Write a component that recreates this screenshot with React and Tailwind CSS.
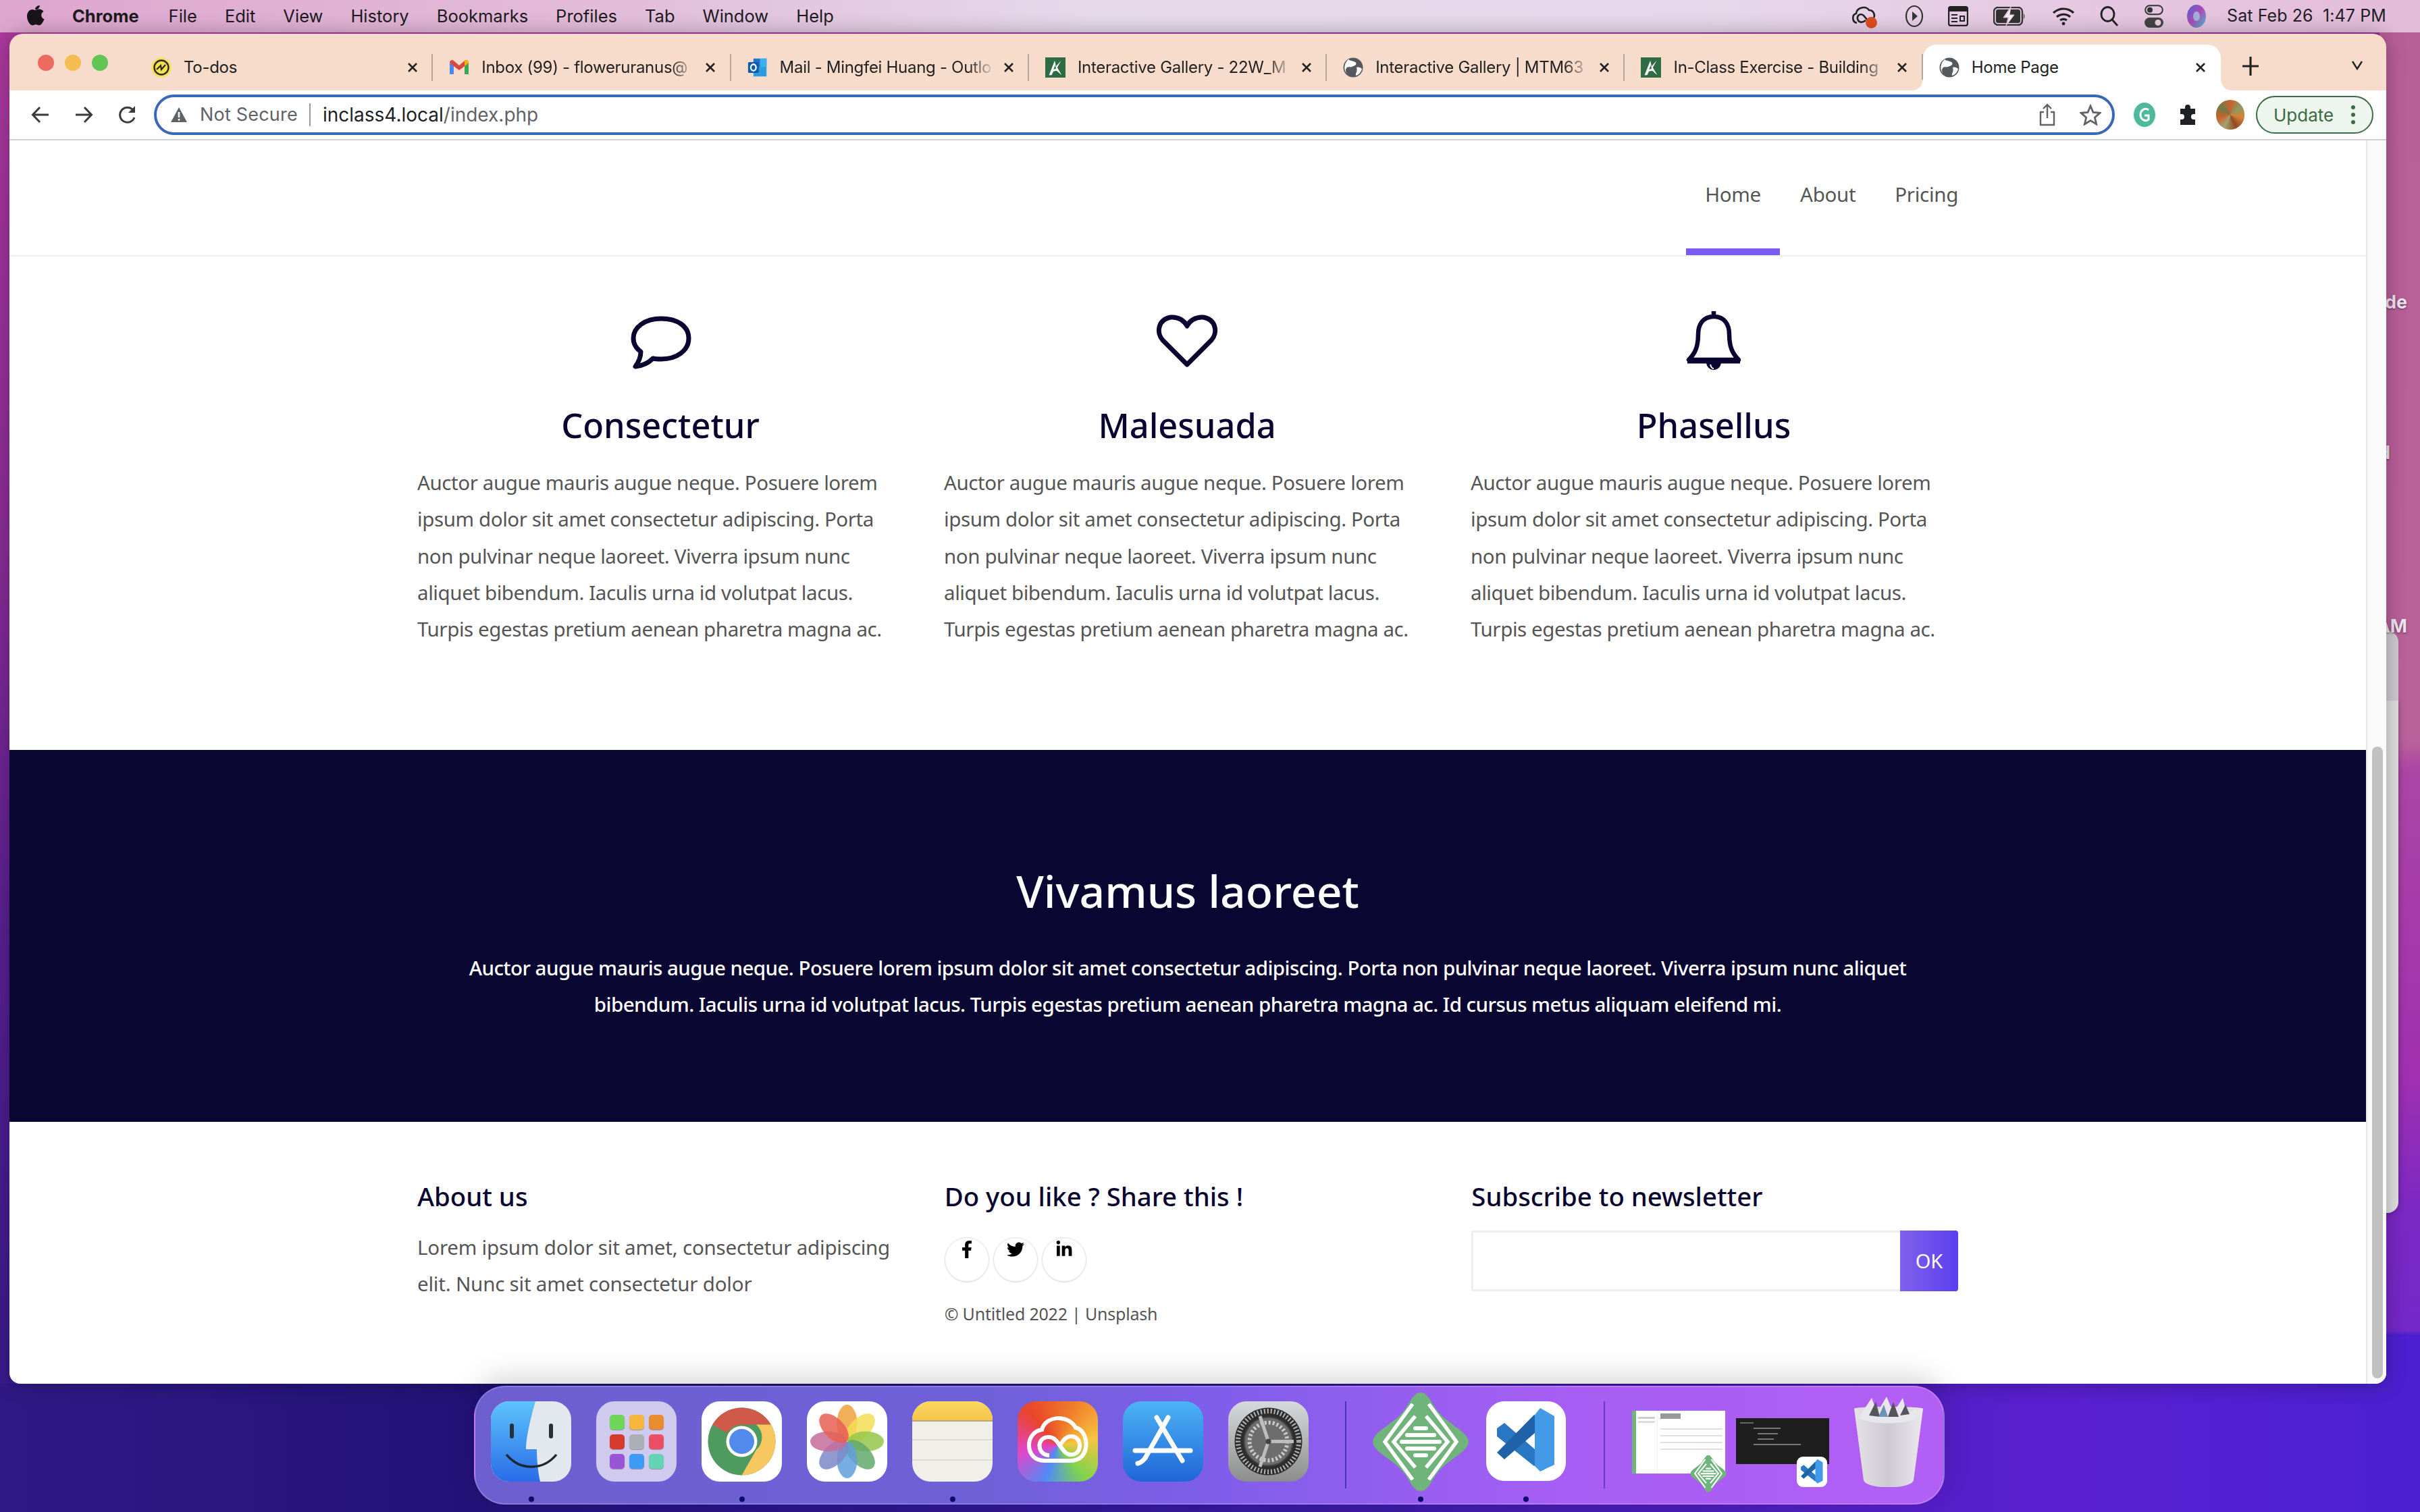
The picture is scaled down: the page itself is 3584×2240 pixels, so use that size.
import React from "react";
import { FaFacebookF, FaTwitter, FaLinkedinIn } from "react-icons/fa";

const LOREM = [
  "Auctor augue mauris augue neque. Posuere lorem",
  "ipsum dolor sit amet consectetur adipiscing. Porta",
  "non pulvinar neque laoreet. Viverra ipsum nunc",
  "aliquet bibendum. Iaculis urna id volutpat lacus.",
  "Turpis egestas pretium aenean pharetra magna ac.",
];

function XIcon() {
  return (
    <svg width="16" height="16" viewBox="0 0 16 16" className="shrink-0">
      <path d="M2 2 14 14M14 2 2 14" stroke="#222" strokeWidth="2.6" />
    </svg>
  );
}

function Globe() {
  return (
    <svg width="30" height="30" viewBox="0 0 30 30">
      <circle cx="15" cy="15" r="14.5" fill="#55595e" />
      <path d="M8 3c4 3 9 2 11 5s-3 5-6 6-6-1-8 2-1 6 2 9l-2-2C1 19 1 9 8 3Z" fill="#fff" />
      <path d="M20 15c3-1 6 0 8 2-1 5-5 9-9 10-1-4 3-5 1-12Z" fill="#fff" />
    </svg>
  );
}

function AC() {
  return (
    <svg width="32" height="32" viewBox="0 0 32 32">
      <rect width="32" height="32" fill="#2f6b45" />
      <path d="M6 28 15 5l2 9 8-9-6 11 7 12-8-7-5 1-3 6Z" fill="#fff" />
      <path d="M13 19l3-7 1 6Z" fill="#2f6b45" />
    </svg>
  );
}

function Todos() {
  return (
    <svg width="30" height="30" viewBox="0 0 30 30">
      <circle cx="15" cy="15" r="14.5" fill="#f7e04b" />
      <circle cx="15" cy="15" r="10.5" fill="none" stroke="#2a2a22" strokeWidth="2.4" />
      <path d="M8 18l6-6 1 6 6-7" fill="none" stroke="#2a2a22" strokeWidth="2.2" />
    </svg>
  );
}

function Gmail() {
  return (
    <svg width="30" height="30" viewBox="0 0 30 30">
      <path d="M1 8v17h6V12Z" fill="#4a87ee" />
      <path d="M29 8v17h-6V12Z" fill="#3aa757" />
      <path d="M1 8c0-4 4-5 6-3l8 7 8-7c2-2 6-1 6 3l-6 5-8 6-8-6Z" fill="#d9473d" />
      <path d="M23 5c2-2 6-1 6 3l-6 5Z" fill="#f4b400" />
    </svg>
  );
}

function Outlook() {
  return (
    <svg width="34" height="34" viewBox="0 0 34 34">
      <rect x="10" y="2" width="22" height="14" fill="#1f74c9" />
      <rect x="10" y="16" width="22" height="16" fill="#2b9ae0" />
      <rect x="21" y="2" width="11" height="14" fill="#37b0ee" />
      <rect x="1" y="8" width="18" height="18" rx="2" fill="#0f5cab" />
      <ellipse cx="10" cy="17" rx="4.4" ry="5.4" fill="none" stroke="#fff" strokeWidth="2.6" />
    </svg>
  );
}

function Tab({ icon, title, active, wide }) {
  return (
    <div
      className={
        "relative flex h-[68px] w-[441.3px] shrink-0 items-center pl-[24px] " +
        (active ? "rounded-t-[20px] bg-white" : "")
      }
    >
      <div className="flex w-[30px] shrink-0 items-center justify-center">{icon}</div>
      <div
        className={
          "ml-[18px] w-[318px] whitespace-nowrap text-[24px] tracking-[-0.3px] text-[#222] " +
          (wide ? "" : "[mask-image:linear-gradient(to_right,#000_88%,transparent)]")
        }
      >
        {title}
      </div>
      <div className="ml-[13px]">
        <XIcon />
      </div>
      {active ? (
        <>
          <div className="absolute bottom-0 left-[-16px] h-[16px] w-[16px] bg-[radial-gradient(circle_at_0_0,#f7dccc_15.5px,#fff_16px)]" />
          <div className="absolute bottom-0 right-[-16px] h-[16px] w-[16px] bg-[radial-gradient(circle_at_100%_0,#f7dccc_15.5px,#fff_16px)]" />
        </>
      ) : (
        <div className="absolute right-0 top-[14px] h-[40px] w-[2px] bg-[#b5a79e]" />
      )}
    </div>
  );
}

function MenuBar() {
  const items = ["File", "Edit", "View", "History", "Bookmarks", "Profiles", "Tab", "Window", "Help"];
  return (
    <div className="relative z-10 flex h-[48px] shrink-0 items-center bg-[linear-gradient(to_right,#dea6cf_0%,#e2bcd9_25%,#e5d9ea_45%,#e6d8ea_70%,#e6c6e0_88%,#e3bcd8_100%)] pl-[40px] pr-[37px] font-['Inter',sans-serif] text-[25.5px] text-[#1d1a20]">
      <svg width="26" height="31" viewBox="0 0 26 31" className="-mt-[3px]">
        <path
          d="M19 1c0 3-3 7-7 6 0-3 3-6 7-6Zm-7 7c2 0 3-1.400 6-1.400 2.500 0 5 1.400 6.500 3.400-5 3-4 9.500 1 11.500-1.500 4-4.500 9-7.500 9-2 0-3-1.300-5-1.300s-3 1.300-5 1.300C4 30.500 0 23 0 17c0-6 4-10 8-10 1.500 0 3 1 4 1Z"
          fill="#17141a"
        />
      </svg>
      <div className="ml-[41px] font-bold">Chrome</div>
      <div className="ml-[44px] flex gap-[41px]">
        {items.map((m) => (
          <span key={m}>{m}</span>
        ))}
      </div>
      <div className="ml-auto flex items-center">
        <div className="relative h-[36px] w-[40px]">
          <svg width="38" height="34" viewBox="0 0 38 34" fill="none" stroke="#222" strokeWidth="2.6">
            <path d="M9 28C2 27 1 16 8 14 9 5 22 2 27 9c7 0 10 8 6 13" />
            <path d="M22 24c-5 5-11 3-12-2s4-9 9-5l5 6" />
          </svg>
          <div className="absolute bottom-0 right-[1px] h-[17px] w-[17px] rounded-full bg-[#df4d22]" />
        </div>
        <svg className="ml-[40px]" width="28" height="34" viewBox="0 0 28 34" fill="none">
          <ellipse cx="14" cy="17" rx="12" ry="15" stroke="#333" strokeWidth="2.2" />
          <path d="M11 10l8 7-8 7Z" fill="#333" />
        </svg>
        <svg className="ml-[36px]" width="30" height="30" viewBox="0 0 30 30" fill="none">
          <rect x="1" y="1" width="28" height="28" rx="3" stroke="#222" strokeWidth="2.4" />
          <rect x="1" y="1" width="28" height="7" fill="#222" />
          <path d="M5 13h9M5 18h9M5 23h9M18 15h6v7h-6Z" stroke="#222" strokeWidth="2" />
        </svg>
        <svg className="ml-[37px]" width="48" height="28" viewBox="0 0 48 28" fill="none">
          <rect x="1" y="1" width="42" height="26" rx="6" stroke="#333" strokeWidth="2.4" />
          <rect x="4" y="4" width="36" height="20" rx="3" fill="#333" />
          <path d="M45 10c2 1 2 7 0 8Z" fill="#555" />
          <path d="M26 0 15 16h7l-3 12 12-16h-7Z" fill="#e8c8df" stroke="#e8c8df" />
          <path d="M25 4 18 15h6l-2 8 7-10h-6Z" fill="#fff" />
        </svg>
        <svg className="ml-[39px]" width="34" height="28" viewBox="0 0 34 28" fill="none" stroke="#222" strokeWidth="3.2">
          <path d="M2 9c9-8 21-8 30 0M7 15c6-5 14-5 20 0M12 20c3-2 7-2 10 0" />
          <circle cx="17" cy="25" r="2.400" fill="#222" stroke="none" />
        </svg>
        <svg className="ml-[37px]" width="28" height="30" viewBox="0 0 28 30" fill="none" stroke="#222" strokeWidth="2.800">
          <ellipse cx="11.500" cy="12" rx="9.500" ry="10.500" />
          <path d="M18 20l8 9" />
        </svg>
        <svg className="ml-[38px]" width="28" height="34" viewBox="0 0 28 34">
          <rect x="1.200" y="1.200" width="25.600" height="13" rx="6.500" fill="none" stroke="#333" strokeWidth="2" />
          <circle cx="8" cy="7.700" r="4" fill="#333" />
          <rect x="0" y="19" width="28" height="15" rx="7.500" fill="#444" />
          <circle cx="20" cy="26.500" r="4.500" fill="#e8d0e4" />
        </svg>
        <svg className="ml-[35px]" width="28" height="34" viewBox="0 0 28 34">
          <defs>
            <linearGradient id="siri" x1="0" y1="0" x2="1" y2="1">
              <stop offset="0" stopColor="#4a66c9" />
              <stop offset=".5" stopColor="#b04ab8" />
              <stop offset="1" stopColor="#3ec8d8" />
            </linearGradient>
          </defs>
          <ellipse cx="14" cy="17" rx="14" ry="17" fill="url(#siri)" />
          <ellipse cx="14" cy="17" rx="5" ry="7" fill="#9fd8e8" opacity=".7" />
        </svg>
        <div className="ml-[31px] w-[249px] shrink-0 whitespace-pre text-[25px] tracking-[0.1px] text-[#221e26]">Sat Feb 26  1:47 PM</div>
      </div>
    </div>
  );
}

function Toolbar() {
  return (
    <div className="flex h-[72px] shrink-0 items-center bg-white pl-[32px] font-['Inter',sans-serif]">
      <svg width="28" height="28" viewBox="0 0 28 28" fill="none" stroke="#3b3b3b" strokeWidth="3">
        <path d="M26 14H3M13 3 2.500 14 13 25" />
      </svg>
      <svg className="ml-[36px]" width="28" height="28" viewBox="0 0 28 28" fill="none" stroke="#3b3b3b" strokeWidth="3">
        <path d="M2 14h23M15 3l10.500 11L15 25" />
      </svg>
      <svg className="ml-[36px]" width="30" height="30" viewBox="0 0 30 30" fill="none" stroke="#3b3b3b" strokeWidth="3">
        <path d="M25 19a11 11 0 1 1-2-11" />
        <path d="M26 2v10H16Z" fill="#3b3b3b" stroke="none" />
      </svg>
      <div className="ml-[24px] flex h-[60px] w-[2904px] shrink-0 items-center rounded-full border-[4px] border-[#3a68b8] pl-[20px] pr-[16px]">
        <svg width="26" height="24" viewBox="0 0 26 24">
          <path d="M13 1 25 23H1Z" fill="#5f6368" />
          <rect x="11.700" y="8" width="2.600" height="8" fill="#fff" />
          <rect x="11.700" y="18" width="2.600" height="2.600" fill="#fff" />
        </svg>
        <span className="ml-[18px] text-[27px] tracking-[0.2px] text-[#5f6368]">Not Secure</span>
        <span className="ml-[17px] h-[34px] w-[2px] bg-[#9a9a9a]" />
        <span className="ml-[18px] text-[28px] text-[#202124]">
          inclass4.local<span className="text-[#5f6368]">/index.php</span>
        </span>
        <svg className="ml-auto" width="24" height="34" viewBox="0 0 24 34" fill="none" stroke="#5f6368" strokeWidth="2.400">
          <path d="M7 13H2v19h20V13h-5M12 22V2M6 8l6-6 6 6" />
        </svg>
        <svg className="ml-[36px]" width="32" height="32" viewBox="0 0 32 32" fill="none" stroke="#5f6368" strokeWidth="2.800">
          <path d="M16 3l4 9.500 10 .8-7.600 6.600 2.300 10L16 24.600 7.300 30l2.300-10L2 13.300l10-.8Z" />
        </svg>
      </div>
      <svg className="ml-[28px]" width="32" height="36" viewBox="0 0 32 36">
        <ellipse cx="16" cy="18" rx="16" ry="18" fill="#4dbb9b" />
        <path d="M22 11c-5-4-12 0-12 7s7 11 12 7v-6h-6" fill="none" stroke="#fff" strokeWidth="3" />
      </svg>
      <svg className="ml-[32px]" width="32" height="32" viewBox="0 0 32 32">
        <path d="M5 7h7V5a4 4 0 0 1 8 0v2h7v8h-2a4 4 0 0 0 0 8h2v8H5v-8h2a4 4 0 0 0 0-8H5Z" fill="#202124" />
      </svg>
      <div className="ml-[26px] h-[44px] w-[42px] rounded-full bg-[conic-gradient(#c9612a,#8a9a60,#d9803a,#8f4a20,#a8a070,#c9612a,#6f7a4a,#c9612a)]" />
      <div className="ml-[17px] flex h-[56px] w-[174px] items-center rounded-full border-2 border-[#3a6b42] bg-[#eef5ee] pl-[24px] text-[26px] text-[#3a6b42]">
        Update
        <div className="ml-[26px] flex flex-col gap-[5px]">
          <span className="h-[6px] w-[6px] rounded-full bg-[#3a6b42]" />
          <span className="h-[6px] w-[6px] rounded-full bg-[#3a6b42]" />
          <span className="h-[6px] w-[6px] rounded-full bg-[#3a6b42]" />
        </div>
      </div>
    </div>
  );
}

function Bubble() {
  return (
    <svg className="mt-[5px]" width="92" height="80" viewBox="0 0 92 80" fill="none" stroke="#0a0530" strokeWidth="7" strokeLinejoin="round">
      <path d="M47 4C23 4 6 17 6 33c0 8 4 15 11 20 0 8-3 15-8 22 10-1 20-6 26-12 4 1 8 1 12 1 24 0 41-13 41-31S71 4 47 4Z" />
    </svg>
  );
}
function Heart() {
  return (
    <svg width="92" height="80" viewBox="0 0 92 80" fill="none" stroke="#0a0530" strokeWidth="7" strokeLinejoin="round">
      <path d="M46 75 10 39C0 28 3 8 22 5c11-1 20 5 24 13 4-8 13-14 24-13 19 3 22 23 12 34Z" />
    </svg>
  );
}
function Bell() {
  return (
    <svg width="84" height="90" viewBox="0 0 84 90" fill="none" stroke="#0a0530" strokeWidth="6.500" strokeLinejoin="round">
      <path d="M42 1v8" />
      <path d="M42 9C26 9 19 21 19 35c0 18-4 28-14 38h74c-10-10-14-20-14-38 0-14-7-26-23-26Z" />
      <path d="M3 75h78" strokeWidth="7" />
      <path d="M31 76c0 16 22 16 22 0Z" fill="#0a0530" stroke="none" />
      <path d="M37 80c1 4 3 6 5 6" stroke="#fff" strokeWidth="2" />
    </svg>
  );
}

function Feature({ icon, title }) {
  return (
    <div className="flex flex-col">
      <div className="flex h-[92px] items-center justify-center">{icon}</div>
      <h3 className="mt-[46px] text-center text-[50.500px] font-medium leading-[66px] text-[#0a0530]">{title}</h3>
      <p className="mt-[25px] text-[29.500px] leading-[54.300px] tracking-[-0.4px] text-[#555]">
        {LOREM.map((l) => (
          <span key={l} className="block whitespace-nowrap">
            {l}
          </span>
        ))}
      </p>
    </div>
  );
}

function Social({ children }) {
  return (
    <div className="flex h-[66px] w-[66px] justify-center rounded-full border border-[#e2e2e2] pt-[4px] text-[26px] text-black shadow-[0_1px_2px_rgba(0,0,0,0.12)]">
      {children}
    </div>
  );
}

function Page() {
  return (
    <div className="relative flex min-h-0 flex-1 bg-white font-['Noto_Sans',sans-serif]">
      <div className="flex w-[3490px] flex-col">
        <div className="flex h-[172px] shrink-0 justify-end border-b-2 border-[#eee] pr-[604px]">
          <div className="flex text-[29.500px] tracking-[-0.3px] text-[#555]">
            <div className="flex h-[170px] w-[139px] items-center justify-center border-b-[10px] border-[#7a5af0]">Home</div>
            <div className="ml-[30px] flex h-[170px] items-center pb-[10px]">About</div>
            <div className="ml-[58px] flex h-[170px] items-center pb-[10px]">Pricing</div>
          </div>
        </div>
        <div className="h-[731px] shrink-0 pl-[604px] pt-[79px]">
          <div className="grid w-[2280px] grid-cols-3 gap-[60px]">
            <Feature icon={<Bubble />} title="Consectetur" />
            <Feature icon={<Heart />} title="Malesuada" />
            <Feature icon={<Bell />} title="Phasellus" />
          </div>
        </div>
        <div className="h-[551px] shrink-0 bg-[#0a0632] pt-[166px] text-center text-white">
          <h2 className="text-[66px] font-medium leading-[84px]">Vivamus laoreet</h2>
          <p className="mt-[46px] text-[29.500px] font-medium leading-[54px] tracking-[-0.55px]">
            <span className="block">
              Auctor augue mauris augue neque. Posuere lorem ipsum dolor sit amet consectetur adipiscing. Porta non pulvinar neque laoreet. Viverra ipsum nunc aliquet
            </span>
            <span className="block">
              bibendum. Iaculis urna id volutpat lacus. Turpis egestas pretium aenean pharetra magna ac. Id cursus metus aliquam eleifend mi.
            </span>
          </p>
        </div>
        <div className="flex-1 pl-[604px] pt-[80px]">
          <div className="grid w-[2282px] grid-cols-3 gap-[60px]">
            <div>
              <h4 className="text-[38.300px] font-medium leading-[60px] text-[#0a0530]">About us</h4>
              <p className="mt-[19px] whitespace-nowrap text-[29.500px] leading-[54.300px] tracking-[-0.2px] text-[#555]">
                Lorem ipsum dolor sit amet, consectetur adipiscing
                <br />
                elit. Nunc sit amet consectetur dolor
              </p>
            </div>
            <div>
              <h4 className="text-[38.300px] font-medium leading-[60px] text-[#0a0530]">Do you like ? Share this !</h4>
              <div className="mt-[31px] flex gap-[6px]">
                <Social><FaFacebookF /></Social>
                <Social><FaTwitter /></Social>
                <Social><FaLinkedinIn /></Social>
              </div>
              <p className="mt-[29px] text-[25px] tracking-[-0.2px] text-[#555]">© Untitled 2022 | Unsplash</p>
            </div>
            <div>
              <h4 className="text-[38.300px] font-medium leading-[60px] text-[#0a0530]">Subscribe to newsletter</h4>
              <div className="mt-[21px] flex h-[90px]">
                <div className="flex-1 border-[3px] border-r-0 border-[#eee] bg-white" />
                <div className="flex w-[86px] items-center justify-center rounded-r-[4px] bg-[linear-gradient(to_right,#7f62ec,#5b3fee)] text-[29px] text-white">OK</div>
              </div>
            </div>
          </div>
        </div>
      </div>
      <div className="flex w-[30px] flex-col justify-end border-l-2 border-[#e8e8e8] bg-[#fafafa] pb-[8px] pl-[7px]">
        <div className="h-[936px] w-[16px] rounded-full bg-[#c1c1c1]" />
      </div>
    </div>
  );
}

function Win() {
  return (
    <div className="relative z-10 ml-[14px] mt-[2px] flex h-[2000px] w-[3520px] shrink-0 flex-col overflow-hidden rounded-t-[20px] rounded-b-[16px] shadow-[0_0_30px_rgba(0,0,0,0.3)]">
      <div className="flex h-[84px] shrink-0 items-end bg-[#f7dccc]">
        <div className="relative flex w-[186px] shrink-0 items-center self-stretch pl-[42px]">
          <span className="mb-[-2px] flex gap-[16px]">
            <span className="h-[24px] w-[24px] rounded-full bg-[#ee6a5f]" />
            <span className="h-[24px] w-[24px] rounded-full bg-[#f5bd4f]" />
            <span className="h-[24px] w-[24px] rounded-full bg-[#61c454]" />
          </span>
        </div>
        <div className="flex font-['Inter',sans-serif]">
          <Tab icon={<Todos />} title="To-dos" wide />
          <Tab icon={<Gmail />} title="Inbox (99) - floweruranus@" />
          <Tab icon={<Outlook />} title="Mail - Mingfei Huang - Outlo" />
          <Tab icon={<AC />} title="Interactive Gallery - 22W_M" />
          <Tab icon={<Globe />} title="Interactive Gallery | MTM63" />
          <Tab icon={<AC />} title="In-Class Exercise - Building" />
          <Tab icon={<Globe />} title="Home Page" active wide />
        </div>
        <svg className="mb-[20px] ml-[32px]" width="24" height="32" viewBox="0 0 24 32" stroke="#222" strokeWidth="3.200">
          <path d="M12 2v28M0 16h24" />
        </svg>
        <svg className="mb-[28px] ml-[137px]" width="18" height="20" viewBox="0 0 18 20" fill="none" stroke="#222" strokeWidth="2.400">
          <path d="M2 5l7 11 7-11" />
        </svg>
      </div>
      <Toolbar />
      <div className="h-[2px] shrink-0 bg-[#cfcfcf]" />
      <Page />
    </div>
  );
}

function Rounded({ className, children }) {
  return <div className={"h-[119px] w-[119px] shrink-0 overflow-hidden rounded-[27px] " + (className || "")}>{children}</div>;
}

function Finder() {
  return (
    <Rounded>
      <svg width="119" height="119" viewBox="0 0 119 119">
        <defs>
          <linearGradient id="fb" x1="0" y1="0" x2="0" y2="1">
            <stop offset="0" stopColor="#5cc3fb" />
            <stop offset="1" stopColor="#2a6ce8" />
          </linearGradient>
        </defs>
        <rect width="119" height="119" fill="#e3e7ee" />
        <path d="M0 0h66C58 28 52 55 52 71h16c0 18 2 34 5 48H0Z" fill="url(#fb)" />
        <rect x="28" y="33" width="6" height="22" rx="3" fill="#26303c" />
        <rect x="86" y="33" width="6" height="22" rx="3" fill="#26303c" />
        <path d="M23 79c20 24 54 24 74 0" fill="none" stroke="#1f2733" strokeWidth="3.500" />
      </svg>
    </Rounded>
  );
}

function Launchpad() {
  const c = ["#6fd659", "#f4b63d", "#e98c2f", "#d63a2c", "#aab0b5", "#ea4f63", "#9a55d6", "#3d9bf4", "#63d3b4"];
  return (
    <Rounded className="grid grid-cols-[repeat(3,22px)] content-center justify-center gap-[7px] bg-[#d0cbee]">
      {c.map((x) => (
        <span key={x} className="h-[22px] w-[22px] rounded-[5px] shadow-[0_1px_1px_rgba(0,0,0,0.3)]" style={{ backgroundColor: x }} />
      ))}
    </Rounded>
  );
}

function ChromeIcon() {
  return (
    <Rounded className="bg-white">
      <svg width="119" height="119" viewBox="0 0 119 119">
        <circle cx="59.500" cy="59.500" r="50" fill="#4e9a5f" />
        <path d="M59.500 9.500a50 50 0 0 1 43.300 25H59.500a25 25 0 0 0-21.700 12.500L16.200 34.500A50 50 0 0 1 59.500 9.500Z" fill="#d05a4a" />
        <path d="M102.800 34.500a50 50 0 0 1-43.300 75L81 72a25 25 0 0 0 0-37.500Z" fill="#f6c85f" />
        <circle cx="59.500" cy="59.500" r="23" fill="#fff" />
        <circle cx="59.500" cy="59.500" r="18.500" fill="#528bec" />
      </svg>
    </Rounded>
  );
}

function Photos() {
  const c = ["#f0a13c", "#f2de55", "#95c74a", "#62a96c", "#5f9fdb", "#7d88c7", "#c66c9b", "#e75f52"];
  return (
    <Rounded className="bg-white">
      <svg width="119" height="119" viewBox="0 0 119 119">
        {c.map((x, i) => (
          <ellipse key={x} cx="59.500" cy="32" rx="15" ry="27" fill={x} opacity=".85" transform={`rotate(${i * 45} 59.500 59.500)`} />
        ))}
      </svg>
    </Rounded>
  );
}

function Notes() {
  return (
    <Rounded className="bg-[#f1efea]">
      <div className="h-[30px] border-b-2 border-[#b8a678] bg-[linear-gradient(#fbd860,#f5c44a)]" />
      <div className="mt-[26px] h-[2px] bg-[#dcdad5]" />
      <div className="mt-[28px] h-[2px] bg-[#dcdad5]" />
    </Rounded>
  );
}

function CC() {
  return (
    <Rounded className="bg-[conic-gradient(from_200deg_at_50%_55%,#4f8cf7,#e245c8,#e8452a,#f07b2a,#f7c53f,#7fd34e,#4f8cf7)]">
      <svg width="119" height="119" viewBox="0 0 119 119" fill="none" stroke="#fff" strokeWidth="6">
        <path d="M40 88c-30 0-30-42-4-46 6-22 40-22 50-3 20 4 24 49-8 49Z" />
        <path d="M47 80c-18 0-20-26-2-27 10-1 14 8 18 13s8 14 18 13c16-2 14-28-2-27-9 0-13 9-17 14" />
      </svg>
    </Rounded>
  );
}

function AppStore() {
  return (
    <Rounded className="bg-[linear-gradient(#4cb3f5,#1f66d8)]">
      <svg width="119" height="119" viewBox="0 0 119 119" fill="none" stroke="#fff" strokeWidth="7" strokeLinecap="round">
        <path d="M67 24 33 84M50 24l38 64" />
        <path d="M18 73h82" />
        <path d="M33 84c-3 4-6 7-11 8" />
      </svg>
    </Rounded>
  );
}

function Settings() {
  return (
    <Rounded className="bg-[linear-gradient(#d6dadd,#8c8c8c)]">
      <svg width="119" height="119" viewBox="0 0 119 119" fill="none">
        <circle cx="59.500" cy="59.500" r="50" fill="#2d2d2d" />
        <circle cx="59.500" cy="59.500" r="45" stroke="#b5b5b5" strokeWidth="7" strokeDasharray="2 3" />
        <circle cx="59.500" cy="59.500" r="36" fill="#6d6d6d" stroke="#444" strokeWidth="2" />
        <circle cx="59.500" cy="59.500" r="28" stroke="#c9c9c9" strokeWidth="6" strokeDasharray="3 3" />
        <path d="M59.500 59.500 47 22M59.500 59.500H97M59.500 59.500 47 97" stroke="#bdbdbd" strokeWidth="5" />
        <circle cx="59.500" cy="59.500" r="4" fill="#444" />
      </svg>
    </Rounded>
  );
}

function Laragon({ w, h }) {
  return (
    <svg width={w} height={h} viewBox="0 0 144 148" className="shrink-0">
      <path d="M72 1c10 0 14 12 24 26 12 18 47 32 47 47s-35 29-47 47c-10 14-14 26-24 26s-14-12-24-26C36 103 1 89 1 74s35-29 47-47C58 13 62 1 72 1Z" fill="#6fb47b" />
      <g fill="none" stroke="#fff" strokeWidth="5.500">
        <path d="M60 18 19 74l41 56M84 18l41 56-41 56" />
        <path d="M64 36 32 74l32 38M80 36l32 38-32 38" />
      </g>
      <g stroke="#fff" strokeWidth="6" strokeLinecap="round">
        <path d="M64 54h16M52 64h40M44 74h56M52 84h40M64 94h16" />
      </g>
    </svg>
  );
}

function VSCode({ size = 118, r = 27 }) {
  return (
    <div className="shrink-0 overflow-hidden bg-white" style={{ width: size, height: size, borderRadius: r }}>
      <svg width={size} height={size} viewBox="0 0 118 118">
        <path d="M16 40 27 32 80 78v12L71 96 16 52Z" fill="#2a78c4" />
        <path d="M16 76 27 86 80 40V26L71 20Z" fill="#2062a8" />
        <path d="M80 10 101 22V94L80 104 72 96V20Z" fill="#439be8" />
      </svg>
    </div>
  );
}

function Trash() {
  return (
    <svg width="106" height="138" viewBox="0 0 106 138" className="shrink-0">
      <defs>
        <linearGradient id="tr" x1="0" y1="0" x2="1" y2="0">
          <stop offset="0" stopColor="#e4e2e6" />
          <stop offset=".5" stopColor="#cdcad2" />
          <stop offset="1" stopColor="#ebe8ee" />
        </linearGradient>
      </defs>
      <path d="M2 22C2 18 104 18 104 22L90 128c-4 14-70 14-74 0Z" fill="url(#tr)" />
      <path d="M12 30 28 6l8 22 14-24 10 24 14-22 6 24 14-8 2 14c-20 10-66 10-88 0Z" fill="#e8e8ec" />
      <path d="M24 32 34 12l6 22ZM52 34l8-22 8 22ZM70 32l8-16 6 14Z" fill="#54565c" />
      <path d="M38 34l8-18 6 18Z" fill="#6b93b5" />
    </svg>
  );
}

function Dot() {
  return <span className="absolute bottom-[2px] left-1/2 h-[8px] w-[8px] -translate-x-1/2 rounded-full bg-[#0b0a6a]" />;
}

function ThumbLight() {
  return (
    <div className="relative mt-[14px] flex h-[93px] w-[138px] shrink-0 overflow-visible bg-white">
      <div className="h-full w-[6px] bg-[#6fb47b]" />
      <div className="h-full w-[32px] border-r border-[#eee] p-[3px]">
        <div className="mt-[6px] h-[3px] bg-[#ccc]" />
        <div className="mt-[3px] h-[3px] bg-[#ddd]" />
      </div>
      <div className="flex-1 p-[4px]">
        <div className="h-[8px] w-[30px] bg-[#999]" />
        <div className="mt-[14px] h-[2px] bg-[#e0e0e0]" />
        <div className="mt-[8px] h-[2px] bg-[#e0e0e0]" />
        <div className="mt-[8px] h-[2px] bg-[#e0e0e0]" />
        <div className="mt-[8px] h-[2px] bg-[#e0e0e0]" />
      </div>
      <div className="absolute bottom-[-28px] right-[-2px]">
        <Laragon w={54} h={56} />
      </div>
    </div>
  );
}

function ThumbDark() {
  return (
    <div className="relative ml-[16px] mt-[25px] h-[68px] w-[138px] shrink-0 bg-[#1e1e1e] p-[6px]">
      <div className="h-[2px] w-[20px] bg-[#666]" />
      <div className="ml-[20px] mt-[6px] h-[2px] w-[40px] bg-[#777]" />
      <div className="ml-[26px] mt-[6px] h-[2px] w-[30px] bg-[#777]" />
      <div className="ml-[26px] mt-[6px] h-[2px] w-[24px] bg-[#777]" />
      <div className="ml-[20px] mt-[6px] h-[2px] w-[70px] bg-[#777]" />
      <div className="absolute bottom-[-34px] right-[3px]">
        <VSCode size={45} r={9} />
      </div>
    </div>
  );
}

function Dock() {
  return (
    <div className="relative z-20 ml-[702px] mt-[3px] flex h-[176px] w-[2178px] shrink-0 rounded-[46px] border-2 border-[rgba(255,255,255,0.18)] bg-[linear-gradient(to_right,#6e5fd0_0%,#7060d8_35%,#7f5eea_50%,#a85ef4_75%,#b25ff5_100%)] pl-[23px] pt-[21px] shadow-[0_-14px_40px_rgba(0,0,0,0.16)]">
      <div className="flex gap-[37px]">
        <div className="relative"><Finder /><Dot /></div>
        <Launchpad />
        <div className="relative"><ChromeIcon /><Dot /></div>
        <Photos />
        <div className="relative"><Notes /><Dot /></div>
        <CC />
        <AppStore />
        <Settings />
      </div>
      <div className="ml-[54px] h-[129px] w-[2px] bg-[#4a34b8]" />
      <div className="relative -mt-[14px] ml-[38px] h-[148px]">
        <Laragon w={144} h={148} />
        <span className="absolute bottom-[-15px] left-1/2 h-[8px] w-[8px] -translate-x-1/2 rounded-full bg-[#0b0a6a]" />
      </div>
      <div className="relative ml-[25px]"><VSCode /><Dot /></div>
      <div className="ml-[56px] h-[129px] w-[2px] bg-[#6a3ac0]" />
      <div className="ml-[40px] flex">
        <ThumbLight />
        <ThumbDark />
      </div>
      <div className="-mt-[11px] ml-[35px]"><Trash /></div>
    </div>
  );
}

export default function App() {
  return (
    <div className="relative flex h-[2240px] w-[3584px] flex-col overflow-hidden bg-[linear-gradient(172deg,#b13a9f_0%,#8a2c98_30%,#5a2092_50%,#3a1a8c_75%,#2a1880_100%)] font-['Inter',sans-serif]">
      <div className="absolute inset-y-0 right-0 w-[60px] bg-[linear-gradient(to_bottom,#b85f98_0%,#ba619b_49%,#ac45a5_51%,#a030b0_71%,#7c28c4_80%,#7428c8_88%,#4c20d0_88.3%,#4a20d0_100%)]" />
      <div className="absolute inset-x-0 bottom-0 top-[2050px] bg-[linear-gradient(to_right,#2f1a85,#221278_20%,#33189a_50%,#4c1cb8_72%,#5a1fd0_85%,#4a20d0)]" />
      <div className="absolute right-[32px] top-[1038px] h-[759px] w-[40px] rounded-b-[16px] bg-[#e0e0e0] shadow-[0_0_8px_rgba(0,0,0,0.3)]" />
      <div className="absolute right-[32px] top-[935px] h-[103px] w-[40px] rounded-t-[16px] bg-[#cfcbcf]" />
      <div className="absolute right-[19px] top-[428px] text-[27px] font-bold text-[#f0e4ee] [text-shadow:0_1px_3px_rgba(0,0,0,0.5)]">de</div>
      <div className="absolute right-[44px] top-[651px] text-[27px] font-bold text-[#f0e4ee] [text-shadow:0_1px_3px_rgba(0,0,0,0.5)]">d</div>
      <div className="absolute right-[19px] top-[908px] text-[27px] font-bold text-[#f0e4ee] [text-shadow:0_1px_3px_rgba(0,0,0,0.5)]">AM</div>
      <MenuBar />
      <Win />
      <Dock />
    </div>
  );
}
